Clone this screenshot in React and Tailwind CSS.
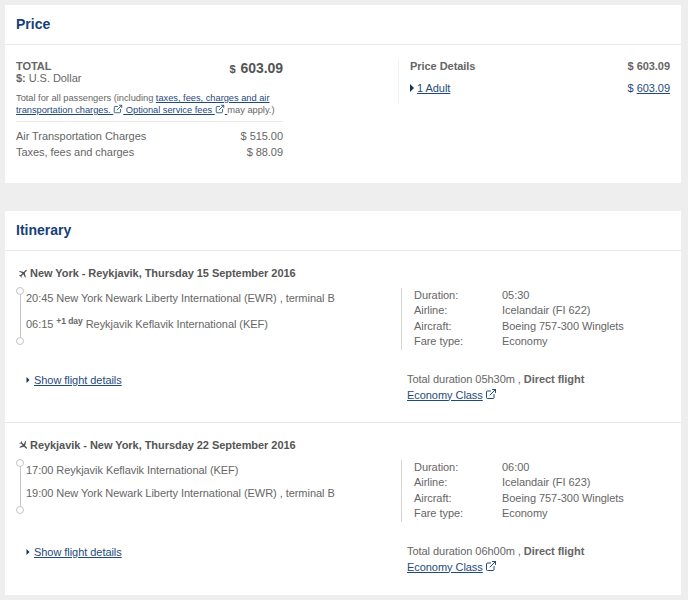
import { ExternalLink } from 'lucide-react';

const link = 'text-[#1f4a7c] underline';

function Ext({ size = 11, className = '' }) {
  return <ExternalLink size={size} strokeWidth={2} className={`inline-block align-[-1px] text-[#1f4a7c] ${className}`} />;
}

function Arrow({ className = '' }) {
  return <span className={`inline-block h-0 w-0 border-y-[4px] border-l-[4px] border-y-transparent border-l-[#12355f] ${className}`} />;
}

function Plane({ flip }) {
  return (
    <svg viewBox="0 0 24 24" className={`h-[11px] w-[11px] shrink-0 fill-[#555] ${flip ? 'rotate-[135deg]' : 'rotate-[45deg]'}`}>
      <path d="M21 16v-2l-8-5V3.5a1.5 1.5 0 0 0-3 0V9l-8 5v2l8-2.5V19l-2 1.5V22l3.5-1 3.5 1v-1.5L13 19v-5.5z" />
    </svg>
  );
}

function Timeline({ height }) {
  return (
    <div className="flex w-[8px] shrink-0 flex-col items-center" style={{ height }}>
      <div className="h-[8px] w-[8px] rounded-full border border-[#c4c4c4] bg-white" />
      <div className="w-px flex-1 bg-[#c9c9c9]" />
      <div className="h-[8px] w-[8px] rounded-full border border-[#c4c4c4] bg-white" />
    </div>
  );
}

function Flight({ title, flip, first, second, gap, info, total, lineHeight }) {
  return (
    <div className="flex">
      <div className="w-[396px] pl-[11px]">
        <div className="flex h-[14px] items-center gap-[1px] pl-[2px] font-bold text-[#555]">
          <Plane flip={flip} />
          <span>{title}</span>
        </div>
        <div className="mt-[7px] flex gap-[2px]">
          <Timeline height={lineHeight} />
          <div className={`flex flex-col ${gap} pt-[3px]`}>
            <div className="h-[16px] leading-[16px]">{first}</div>
            <div className="h-[16px] leading-[16px]">{second}</div>
          </div>
        </div>
        <div className={`flex h-[16px] items-center gap-[4px] pl-[10px] ${flip ? 'mt-[30px]' : 'mt-[27px]'}`}>
          <Arrow className="scale-75" />
          <a className={link}>Show flight details</a>
        </div>
      </div>
      <div className="flex-1 pt-[21.5px]">
        <div className="grid h-[62px] w-[260px] grid-cols-[88px_1fr] border-l border-[#d4d4d4] pl-[12px] leading-[15.5px]">
          {info.map(([k, v]) => [<div key={k}>{k}</div>, <div key={k + 'v'}>{v}</div>])}
        </div>
        <div className="mt-[22.5px] ml-[6px] leading-[15.5px]">
          <div>Total duration {total} , <b className="font-bold">Direct flight</b></div>
          <a className={link}>Economy Class</a><Ext size={12} className="ml-[2px]" />
        </div>
      </div>
    </div>
  );
}

export default function App() {
  return (
    <div className="h-[600px] w-[688px] overflow-hidden bg-[#eeeeee] pt-[5px] pr-[7px] pl-[5px] font-['Liberation_Sans',Arial,sans-serif] text-[11px] tracking-[-0.05px] text-[#666]">
      <section className="h-[178px] bg-white">
        <h2 className="flex h-[40px] items-center border-b border-[#e8e8e8] pl-[11px] text-[14px] font-bold tracking-normal text-[#173f78]">Price</h2>
        <div className="flex pt-[15px]">
          <div className="w-[393px] pl-[11px]">
            <div className="w-[267px]">
              <div className="flex justify-between">
                <div className="leading-[12px]">
                  <div className="font-bold">TOTAL</div>
                  <div><b>$:</b> U.S. Dollar</div>
                </div>
                <div className="font-bold leading-[16px] text-[#555]">$ <span className="ml-[2px] text-[14px]">603.09</span></div>
              </div>
              <p className="mt-[8px] border-b border-[#eaeaea] pb-[5px] text-[9.3px] leading-[12px] tracking-[-0.02px]">
                Total for all passengers (including <a className={link}>taxes, fees, charges and air transportation charges. <Ext size={10} /> Optional service fees <Ext size={10} /> </a>may apply.)
              </p>
              <div className="mt-[6px] flex justify-between leading-[16px]">
                <div>Air Transportation Charges</div>
                <div>$ 515.00</div>
              </div>
              <div className="flex justify-between leading-[16px]">
                <div>Taxes, fees and charges</div>
                <div>$ 88.09</div>
              </div>
            </div>
          </div>
          <div className="h-[44px] w-[272px] border-l border-[#f0f0f0] pl-[11px]">
            <div className="flex justify-between font-bold leading-[12px]"><span>Price Details</span><span>$ 603.09</span></div>
            <div className="mt-[9px] flex justify-between leading-[14px]">
              <span className="flex items-center gap-[3px]"><Arrow /><a className={link}>1 Adult</a></span>
              <span className="text-[#1f4a7c]">$ <a className="underline">603.09</a></span>
            </div>
          </div>
        </div>
      </section>
      <section className="mt-[28px] h-[384px] bg-white">
        <h2 className="flex h-[40px] items-center border-b border-[#e8e8e8] pl-[11px] text-[14px] font-bold tracking-normal text-[#173f78]">Itinerary</h2>
        <div className="h-[172px] border-b border-[#e8e8e8] pt-[15px]">
          <Flight
            title="New York - Reykjavik, Thursday 15 September 2016"
            first="20:45 New York Newark Liberty International (EWR) , terminal B"
            second={<>06:15 <sup className="text-[8.5px] font-bold">+1 day</sup> Reykjavik Keflavik International (KEF)</>}
            gap="gap-[10px]"
            lineHeight={58}
            total="05h30m"
            info={[['Duration:', '05:30'], ['Airline:', 'Icelandair (FI 622)'], ['Aircraft:', 'Boeing 757-300 Winglets'], ['Fare type:', 'Economy']]}
          />
        </div>
        <div className="pt-[15px]">
          <Flight
            flip
            title="Reykjavik - New York, Thursday 22 September 2016"
            first="17:00 Reykjavik Keflavik International (KEF)"
            second="19:00 New York Newark Liberty International (EWR) , terminal B"
            gap="gap-[7px]"
            lineHeight={55}
            total="06h00m"
            info={[['Duration:', '06:00'], ['Airline:', 'Icelandair (FI 623)'], ['Aircraft:', 'Boeing 757-300 Winglets'], ['Fare type:', 'Economy']]}
          />
        </div>
      </section>
    </div>
  );
}
